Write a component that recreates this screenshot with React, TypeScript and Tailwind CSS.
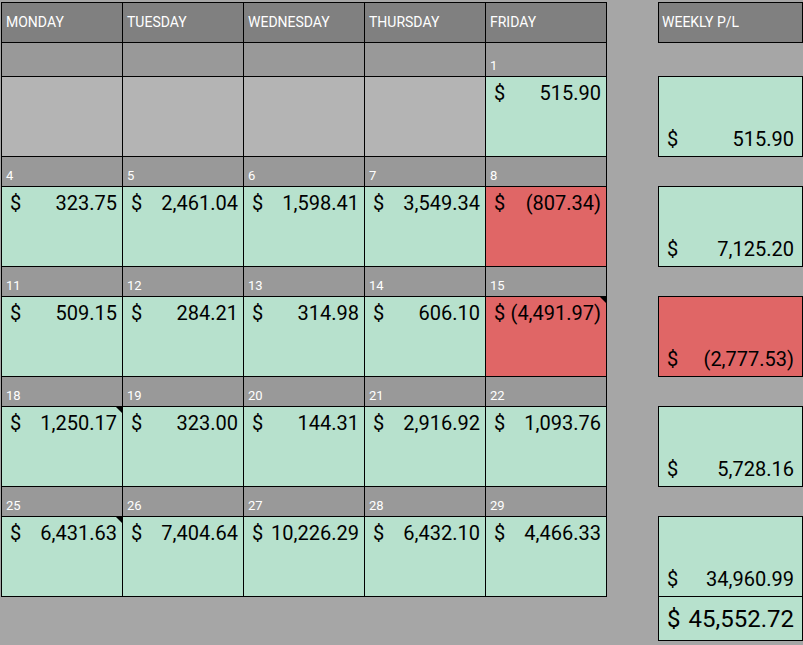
const days = ['MONDAY', 'TUESDAY', 'WEDNESDAY', 'THURSDAY', 'FRIDAY']

type Cell = { d?: number; v?: string; red?: boolean; mark?: boolean }

const weeks: Cell[][] = [
  [{}, {}, {}, {}, { d: 1, v: '515.90' }],
  [
    { d: 4, v: '323.75' },
    { d: 5, v: '2,461.04' },
    { d: 6, v: '1,598.41' },
    { d: 7, v: '3,549.34' },
    { d: 8, v: '(807.34)', red: true },
  ],
  [
    { d: 11, v: '509.15' },
    { d: 12, v: '284.21' },
    { d: 13, v: '314.98' },
    { d: 14, v: '606.10' },
    { d: 15, v: '(4,491.97)', red: true, mark: true },
  ],
  [
    { d: 18, v: '1,250.17', mark: true },
    { d: 19, v: '323.00' },
    { d: 20, v: '144.31' },
    { d: 21, v: '2,916.92' },
    { d: 22, v: '1,093.76' },
  ],
  [
    { d: 25, v: '6,431.63', mark: true },
    { d: 26, v: '7,404.64' },
    { d: 27, v: '10,226.29' },
    { d: 28, v: '6,432.10' },
    { d: 29, v: '4,466.33' },
  ],
]

const weekly = [
  { v: '515.90' },
  { v: '7,125.20' },
  { v: '(2,777.53)', red: true },
  { v: '5,728.16' },
  { v: '34,960.99' },
]

export default function App() {
  return (
    <div
      className="flex h-[645px] w-[803px] items-start bg-[#a6a6a6] text-black"
      style={{ fontFamily: 'Roboto, "Liberation Sans", sans-serif' }}
    >
      <div className="ml-px mt-[2px] grid w-[606px] grid-cols-5 gap-px bg-black p-px">
        {days.map((d) => (
          <div key={d} className="flex h-[39px] items-center bg-[#808080] px-[4px] text-[14px] text-white">
            {d}
          </div>
        ))}
        {weeks.map((w, wi) => (
          <div key={wi} className="col-span-5 grid grid-cols-5 gap-px">
            {w.map((c, ci) => (
              <div key={'s' + ci} className={`flex items-end bg-[#999999] px-[4px] pb-[1px] text-[13px] text-white ${wi === 0 ? 'h-[33px]' : 'h-[29px]'}`}>
                {c.d}
              </div>
            ))}
            {w.map((c, ci) => (
              <div
                key={'c' + ci}
                className={`relative flex h-[79px] items-start justify-between px-[8px] pt-[1px] text-[20px] ${
                  c.v ? (c.red ? 'bg-[#e06666]' : 'bg-[#b7e1cd]') : 'bg-[#b4b4b4]'
                }`}
              >
                {c.v && (
                  <>
                    <span>$</span>
                    <span className="mr-[-3px]">{c.v}</span>
                  </>
                )}
                {c.mark && (
                  <span className="absolute right-0 top-0 h-0 w-0 border-l-[6px] border-t-[6px] border-l-transparent border-t-black" />
                )}
              </div>
            ))}
          </div>
        ))}
      </div>
      <div className="ml-[51px] mt-[2px] flex w-[145px] flex-col">
        <div className="flex h-[41px] items-center border border-black bg-[#808080] px-[3px] text-[14px] text-white">
          WEEKLY P/L
        </div>
        {weekly.map((w, i) => (
          <div
            key={i}
            className={`flex h-[81px] items-end justify-between border border-black px-[8px] pb-[2px] text-[20px] ${
              w.red ? 'bg-[#e06666]' : 'bg-[#b7e1cd]'
            } ${i === 0 ? 'mt-[33px]' : 'mt-[29px]'}`}
          >
            <span>$</span>
            <span>{w.v}</span>
          </div>
        ))}
        <div className="-mt-px flex h-[45px] items-center justify-between border border-black bg-[#b7e1cd] px-[8px] text-[24px]">
          <span>$</span>
          <span>45,552.72</span>
        </div>
      </div>
    </div>
  )
}
